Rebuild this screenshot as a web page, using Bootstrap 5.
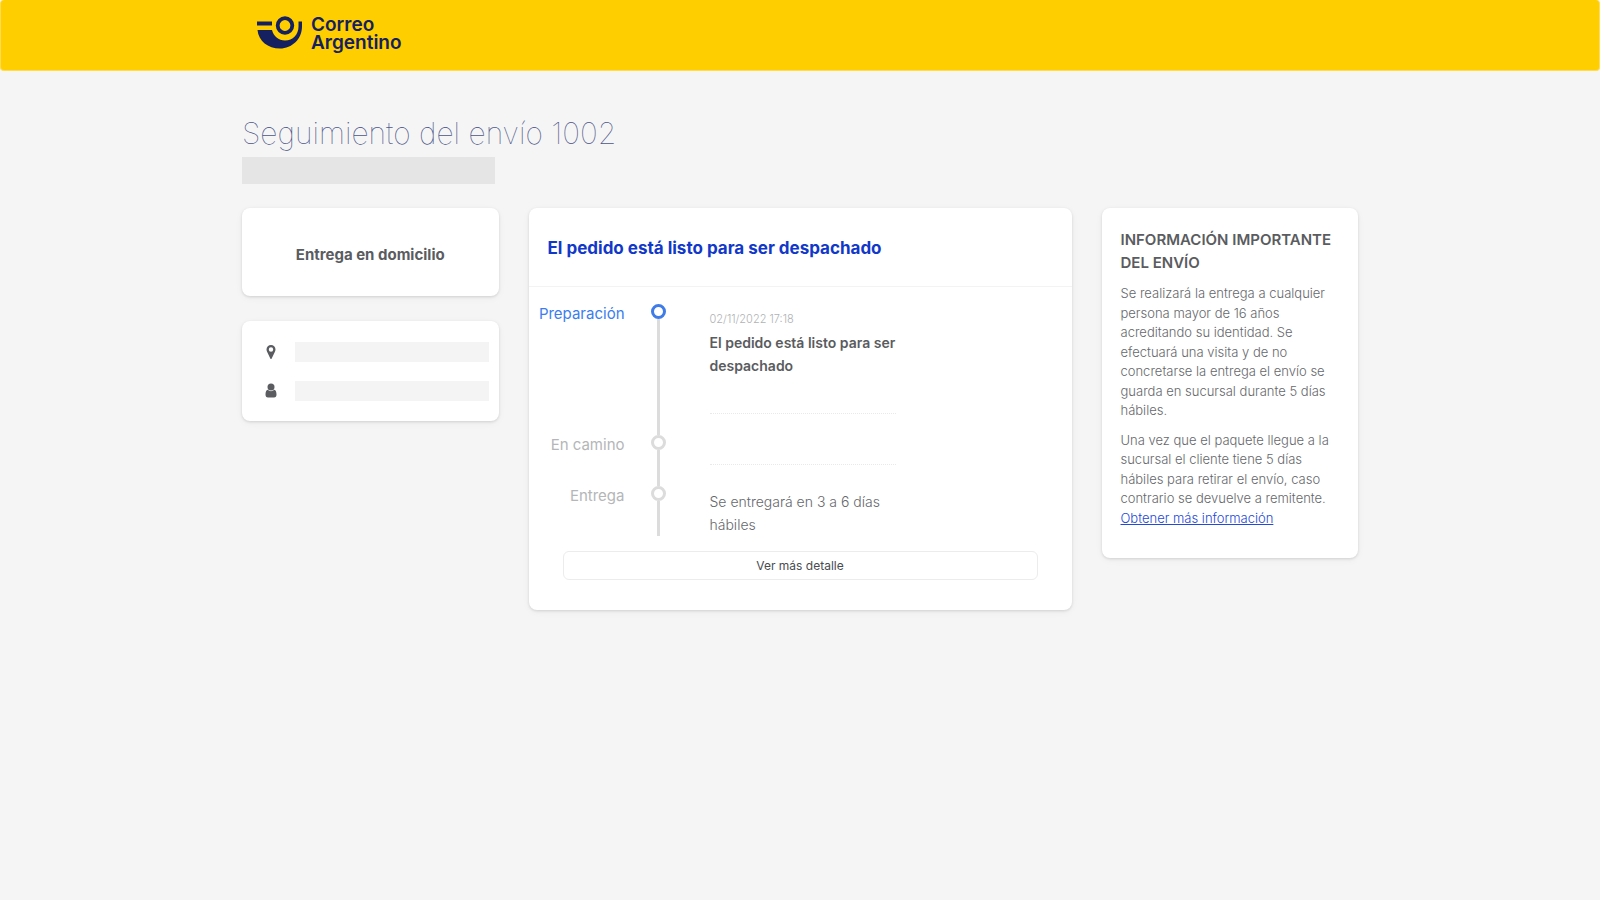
<!DOCTYPE html>
<html lang="es">
<head>
<meta charset="utf-8">
<meta name="viewport" content="width=device-width, initial-scale=1">
<title>Seguimiento del envío 1002</title>
<link href="https://cdn.jsdelivr.net/npm/bootstrap@5.3.0/dist/css/bootstrap.min.css" rel="stylesheet">
<style>
  body { background: #f5f5f5; color: #5a5c60; font-family: Inter, "Liberation Sans", sans-serif; font-size: 14px; }
  .page-width { max-width: 1146px; --bs-gutter-x: 30px; }
  .topbar { background: #ffce00; border: 1px solid #ffdc52; border-top: 0; border-radius: 4px; height: 71px; }
  .brand { color: #14205f; font-size: 19px; font-weight: 600; line-height: 18px; gap: 8px; padding: 16px 0 0 15px; }
  .brand:hover { color: #14205f; }
  .page-title { color: #4d5689; font-size: 30px; font-weight: 100; line-height: 36px; margin: 44px 0 6px; }
  .placeholder-title { background: #e5e5e5; width: 253px; height: 27px; margin-bottom: 24px; }
  .panels { --bs-gutter-x: 30px; --bs-gutter-y: 24px; }
  .panel { background: #fff; border: 0; border-radius: 8px; box-shadow: 0 1px 3px rgba(0,0,0,.13), 0 2px 8px rgba(0,0,0,.04); }
  .delivery { height: 88px; font-size: 15px; font-weight: 700; padding-top: 6px; }
  .contact { padding: 21px 10px 20px 21px; margin-top: 25px; gap: 19px; }
  .contact svg { width: 16px; height: 16px; margin-right: 16px; }
  .placeholder-line { background: #f4f4f4; height: 20px; }
  .status { color: #1138c9; font-size: 17px; font-weight: 700; line-height: 24px; padding: 28px 19px 26px; border-bottom: 1px solid #f3f3f3; }
  .timeline { margin: 17px 0 0; padding: 0; list-style: none; line-height: 23px; }
  .stage { width: 96px; color: #b4b6b8; font-size: 15px; line-height: 20px; }
  .track { width: 68px; }
  .dot { width: 15px; height: 15px; border: 3px solid #dcdcdc; border-radius: 50%; }
  .rail { width: 3px; background: #dcdcdc; }
  .active .stage { color: #3b7df0; }
  .active .dot { border-color: #3f7ce8; }
  .event { width: 186px; margin-left: 17px; }
  .event-text { border-bottom: 1px dotted #e9e9e9; margin-bottom: 21px; min-height: 30px; }
  .active .event-text { min-height: 110px; padding-top: 4px; }
  .stamp { color: #b0b2b4; font-size: 11px; font-weight: 300; }
  .event-name { font-weight: 600; }
  .estimate { padding-top: 4px; font-weight: 300; color: #66686c; }
  .detail { margin: 15px 34px 30px; height: 29px; padding: 0; border: 1px solid #ececec; border-radius: 6px; font-size: 12px; color: #4a4c50; }
  .notice { padding: 20px 19px 30px; }
  .notice h2 { font-size: 15px; font-weight: 600; line-height: 23px; margin-bottom: 10px; }
  .notice p { font-size: 13px; font-weight: 300; margin-bottom: 10px; color: #66686c; }
  .notice p:last-child { margin-bottom: 0; }
  .notice a { color: #2448d8; }
</style>
</head>
<body class="min-vh-100">
<header class="topbar">
  <div class="container-fluid page-width">
    <a class="brand d-inline-flex text-decoration-none" href="#">
      <svg width="46" height="33" viewBox="0 0 46 33" fill="none" aria-hidden="true">
        <path d="M0 5.500h15v4H0z" fill="#14205f"/>
        <circle cx="28" cy="9.500" r="7.300" stroke="#14205f" stroke-width="3.800"/>
        <path d="M.5 14H15c1.500 6 6.500 10.500 13 10.500 8 0 13.500-6 13.500-14V5.500H45v5C45 23 35 32.500 23 32.500S1.500 25 .5 14z" fill="#14205f"/>
      </svg>
      <span>Correo<br>Argentino</span>
    </a>
  </div>
</header>

<main class="container-fluid page-width pb-5">
  <h1 class="page-title">Seguimiento del envío 1002</h1>
  <div class="placeholder-title"></div>

  <div class="row panels mt-0">
    <div class="col-12 col-lg-3 mt-0">
      <section class="panel delivery d-flex align-items-center justify-content-center">Entrega en domicilio</section>
      <section class="panel contact d-flex flex-column">
        <div class="d-flex align-items-center">
          <svg viewBox="0 0 16 16" fill="#5a5c60" aria-hidden="true"><path fill-rule="evenodd" d="M8 1a4.500 4.500 0 0 0-4.500 4.500c0 1 .3 1.700.7 2.500L7.300 14.500q.7 1 1.400 0L11.800 8c.4-.8.700-1.500.7-2.500A4.500 4.500 0 0 0 8 1zm0 2.300a2.200 2.200 0 1 1 0 4.400 2.200 2.200 0 0 1 0-4.400z"/></svg>
          <div class="placeholder-line flex-grow-1"></div>
        </div>
        <div class="d-flex align-items-center">
          <svg viewBox="0 0 16 16" fill="#5a5c60" aria-hidden="true"><circle cx="8" cy="4" r="3.500"/><path d="M4.700 6.700C3.200 7 2.500 9 2.500 11.500c0 2 .8 3 2.500 3h6c1.700 0 2.500-1 2.500-3 0-2.500-.7-4.500-2.200-4.800a4.500 4.500 0 0 1-6.600 0z"/></svg>
          <div class="placeholder-line flex-grow-1"></div>
        </div>
      </section>
    </div>

    <div class="col-12 col-lg-6 mt-lg-0">
      <section class="panel d-flex flex-column">
        <h2 class="status mb-0">El pedido está listo para ser despachado</h2>
        <ol class="timeline">
          <li class="d-flex active">
            <div class="stage text-end">Preparación</div>
            <div class="track d-flex flex-column align-items-center"><span class="dot"></span><span class="rail flex-grow-1"></span></div>
            <div class="event"><div class="event-text">
              <div class="stamp">02/11/2022 17:18</div>
              <div class="event-name">El pedido está listo para ser despachado</div>
            </div></div>
          </li>
          <li class="d-flex">
            <div class="stage text-end">En camino</div>
            <div class="track d-flex flex-column align-items-center"><span class="dot"></span><span class="rail flex-grow-1"></span></div>
            <div class="event"><div class="event-text"></div></div>
          </li>
          <li class="d-flex">
            <div class="stage text-end">Entrega</div>
            <div class="track d-flex flex-column align-items-center"><span class="dot"></span><span class="rail flex-grow-1"></span></div>
            <div class="event estimate">Se entregará en 3 a 6 días hábiles</div>
          </li>
        </ol>
        <button type="button" class="btn detail">Ver más detalle</button>
      </section>
    </div>

    <div class="col-12 col-lg-3 mt-lg-0">
      <section class="panel notice">
        <h2>INFORMACIÓN IMPORTANTE DEL ENVÍO</h2>
        <p>Se realizará la entrega a cualquier persona mayor de 16 años acreditando su identidad. Se efectuará una visita y de no concretarse la entrega el envío se guarda en sucursal durante 5 días hábiles.</p>
        <p>Una vez que el paquete llegue a la sucursal el cliente tiene 5 días hábiles para retirar el envío, caso contrario se devuelve a remitente. <a href="#">Obtener más información</a></p>
      </section>
    </div>
  </div>
</main>
<script src="https://cdn.jsdelivr.net/npm/bootstrap@5.3.0/dist/js/bootstrap.bundle.min.js"></script>
</body>
</html>
